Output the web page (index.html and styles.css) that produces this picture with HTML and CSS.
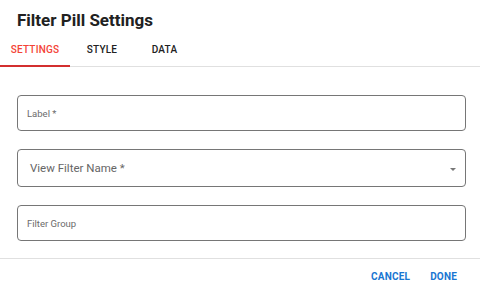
FILE: index.html
```html
<!DOCTYPE html>
<html lang="en">
<head>
    <meta charset="UTF-8">
    <meta name="viewport" content="width=device-width, initial-scale=1.0">
    <title>Filter Pill Settings</title>
    <link rel="stylesheet" href="styles.css">
</head>
<body>
  <div class="dialog">
    <h1 class="title">Filter Pill Settings</h1>
    <div class="tabs">
      <div class="tab active">SETTINGS</div>
      <div class="tab">STYLE</div>
      <div class="tab">DATA</div>
    </div>
    <div class="content">
      <div class="field">
        <span class="placeholder">Label *</span>
      </div>
      <div class="field select">
        <span class="placeholder big">View Filter Name *</span>
        <span class="arrow"></span>
      </div>
      <div class="field">
        <span class="placeholder">Filter Group</span>
      </div>
    </div>
    <div class="actions">
      <button class="btn">CANCEL</button>
      <button class="btn">DONE</button>
    </div>
  </div>
</body>
</html>
```

FILE: styles.css
```css
*{
    margin: 0;
    padding: 0;
    box-sizing: border-box;
}
body{
    font-family: Roboto, "Liberation Sans", sans-serif;
    background: #fff;
    width: 480px;
    height: 293px;
    overflow: hidden;
}
.dialog{
    display: flex;
    flex-direction: column;
}
.title{
    font-size: 17px;
    font-weight: 700;
    color: #212121;
    padding: 10px 17px 0;
    height: 32px;
    line-height: 20px;
}
.tabs{
    display: flex;
    border-bottom: 1px solid #e0e0e0;
    height: 35px;
}
.tab{
    font-size: 10px;
    font-weight: 500;
    color: #212121;
    width: 70px;
    text-align: center;
    padding-top: 12px;
    letter-spacing: 0.2px;
}
.tab:nth-child(2){
    width: 64px;
}
.tab:nth-child(3){
    width: 61px;
}
.tab.active{
    color: #f44336;
    border-bottom: 2px solid #d32f2f;
    margin-bottom: -1px;
}
.content{
    display: flex;
    flex-direction: column;
    gap: 18px;
    padding: 28px 14px 17px 17px;
    border-bottom: 1px solid #e0e0e0;
}
.field{
    height: 36px;
    border: 1px solid #767676;
    border-radius: 4px;
    display: flex;
    align-items: center;
    padding-left: 9px;
    position: relative;
}
.field.select{
    height: 38px;
    padding-left: 12px;
}
.placeholder{
    font-size: 9.5px;
    color: #6b6b6b;
}
.placeholder.big{
    font-size: 11.5px;
    color: #666;
}
.arrow{
    position: absolute;
    right: 9px;
    top: 18px;
    border-left: 3.5px solid transparent;
    border-right: 3.5px solid transparent;
    border-top: 3.5px solid #777;
}
.actions{
    display: flex;
    justify-content: flex-end;
    gap: 20px;
    padding: 12px 23px 0 0;
}
.btn{
    border: none;
    background: none;
    font-family: Roboto, "Liberation Sans", sans-serif;
    font-size: 10px;
    font-weight: 700;
    color: #1976d2;
    letter-spacing: 0.2px;
}
```
